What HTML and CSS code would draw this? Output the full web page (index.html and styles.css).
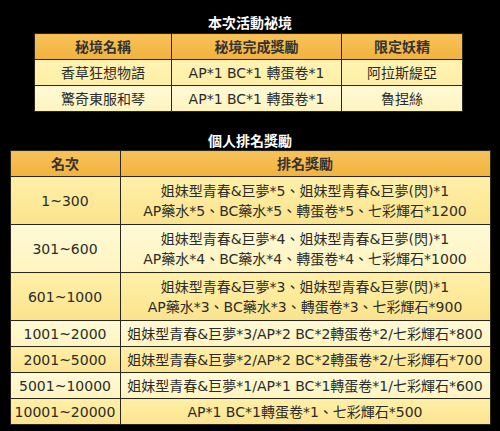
FILE: index.html
```html
<!DOCTYPE html>
<html lang="zh-Hant">
<head>
<meta charset="utf-8">
<title>活動獎勵</title>
<link rel="stylesheet" href="styles.css">
</head>
<body>
<div class="page">
  <h2 class="title">本次活動祕境</h2>
  <table class="grid grid-small">
    <colgroup><col class="c1"><col class="c2"><col class="c3"></colgroup>
    <thead>
      <tr><th>秘境名稱</th><th>秘境完成獎勵</th><th>限定妖精</th></tr>
    </thead>
    <tbody>
      <tr class="r-a"><td>香草狂想物語</td><td>AP*1 BC*1 轉蛋卷*1</td><td>阿拉斯緹亞</td></tr>
      <tr class="r-b"><td>驚奇東服和琴</td><td>AP*1 BC*1 轉蛋卷*1</td><td>魯捏絲</td></tr>
    </tbody>
  </table>

  <h2 class="title title-2">個人排名獎勵</h2>
  <table class="grid grid-big">
    <colgroup><col class="k1"><col class="k2"></colgroup>
    <thead>
      <tr><th>名次</th><th>排名獎勵</th></tr>
    </thead>
    <tbody>
      <tr class="tall r-c"><td>1~300</td><td>姐妹型青春&amp;巨夢*5、姐妹型青春&amp;巨夢(閃)*1<br>AP藥水*5、BC藥水*5、轉蛋卷*5、七彩輝石*1200</td></tr>
      <tr class="tall r-b"><td>301~600</td><td>姐妹型青春&amp;巨夢*4、姐妹型青春&amp;巨夢(閃)*1<br>AP藥水*4、BC藥水*4、轉蛋卷*4、七彩輝石*1000</td></tr>
      <tr class="tall r-c"><td>601~1000</td><td>姐妹型青春&amp;巨夢*3、姐妹型青春&amp;巨夢(閃)*1<br>AP藥水*3、BC藥水*3、轉蛋卷*3、七彩輝石*900</td></tr>
      <tr class="r-b"><td>1001~2000</td><td>姐妹型青春&amp;巨夢*3/AP*2 BC*2轉蛋卷*2/七彩輝石*800</td></tr>
      <tr class="r-c"><td>2001~5000</td><td>姐妹型青春&amp;巨夢*2/AP*2 BC*2轉蛋卷*2/七彩輝石*700</td></tr>
      <tr class="r-b"><td>5001~10000</td><td>姐妹型青春&amp;巨夢*1/AP*1 BC*1轉蛋卷*1/七彩輝石*600</td></tr>
      <tr class="r-c"><td>10001~20000</td><td>AP*1 BC*1轉蛋卷*1、七彩輝石*500</td></tr>
    </tbody>
  </table>
</div>
</body>
</html>
```

FILE: styles.css
```css
html, body {
  margin: 0;
  padding: 0;
  background: #000;
}
body {
  width: 500px;
  height: 431px;
  overflow: hidden;
  font-family: "DejaVu Sans", "Noto Sans CJK TC", sans-serif;
  font-size: 14px;
  color: #2b2b2b;
}
.page {
  padding-top: 12px;
}
.title {
  margin: 0;
  text-align: center;
  color: #fff;
  font-size: 14px;
  font-weight: bold;
  line-height: 21px;
  font-family: "Noto Sans CJK TC", sans-serif;
}
.title-2 {
  margin-top: 18px;
  line-height: 20px;
}
.grid {
  border-collapse: collapse;
  table-layout: fixed;
}
.grid th, .grid td {
  border: 1px solid #2a2620;
  text-align: center;
  padding: 0;
  white-space: nowrap;
  line-height: 20px;
}
.grid th {
  height: 25px;
  font-weight: bold;
  color: #333;
  background: linear-gradient(#f7c25a, #f2b23c);
}
.grid td {
  height: 25px;
}
.grid-small {
  margin-left: 34px;
  width: 428px;
}
.c1 { width: 137px; }
.c2 { width: 170px; }
.c3 { width: 121px; }
.grid-big {
  margin: 0 auto;
  width: 480px;
}
.k1 { width: 110px; }
.k2 { width: 370px; }
.grid-big tr.tall td {
  height: 47px;
}
.r-a td {
  background: linear-gradient(#fff3b4, #ffeea4);
}
.r-b td {
  background: linear-gradient(#fffad6, #fff4bf);
}
.r-c td {
  background: linear-gradient(#fff0a8, #fbe38d);
}
```
